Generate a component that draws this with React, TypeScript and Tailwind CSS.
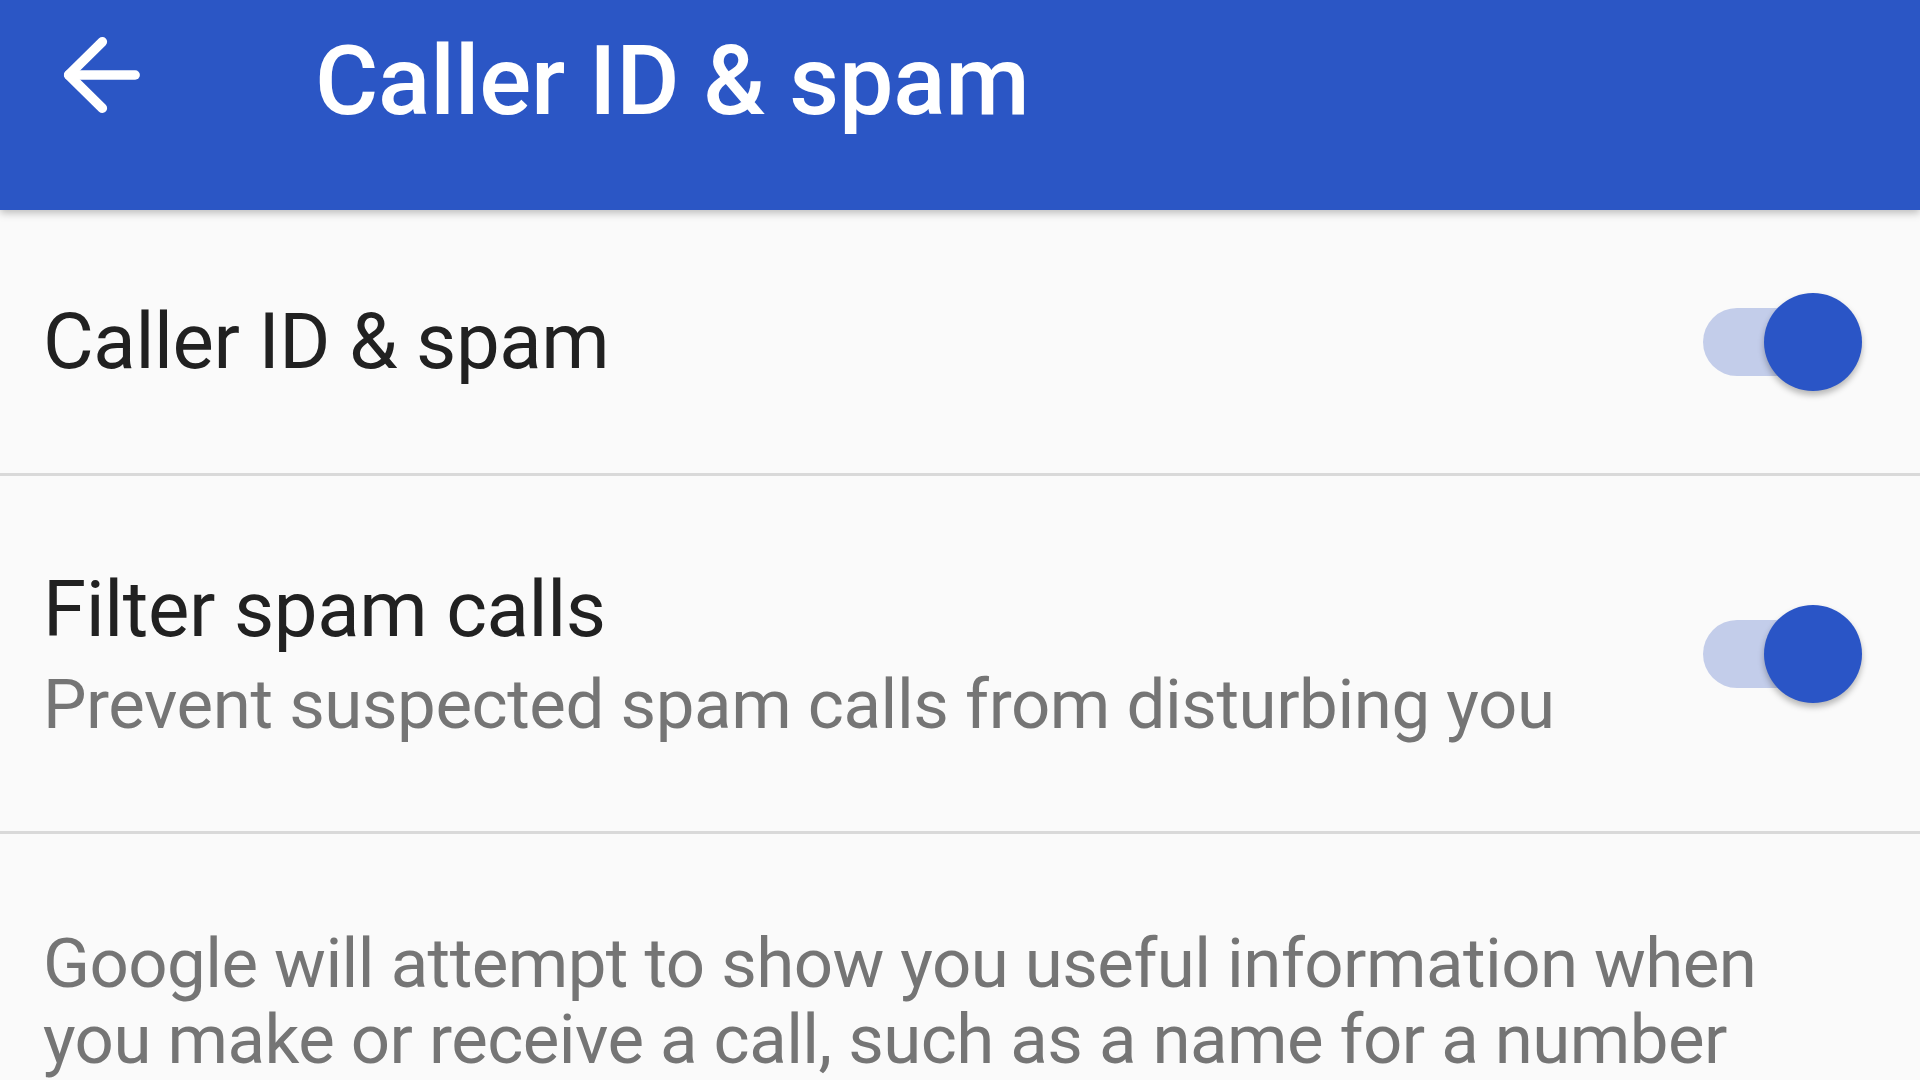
import React from "react";

const font = { fontFamily: "Roboto, 'Noto Sans', Arial, sans-serif" };

function BackArrow() {
  return (
    <svg
      width="114"
      height="114"
      viewBox="0 0 24 24"
      fill="none"
      stroke="#ffffff"
      strokeWidth="2"
      strokeLinecap="round"
      strokeLinejoin="round"
      aria-hidden="true"
    >
      <path d="M19.4 12H5.4" />
      <path d="M12.5 5L5.4 12l7.1 7" />
    </svg>
  );
}

function Toggle() {
  return (
    <div className="relative w-[159px] h-[98px] shrink-0">
      <div className="absolute left-0 top-[15px] w-[144px] h-[68px] rounded-full bg-[#c3cdea]" />
      <div className="absolute right-0 top-0 w-[98px] h-[98px] rounded-full bg-[#2a55c6] shadow-[0_4px_6px_rgba(0,0,0,0.28)]" />
    </div>
  );
}

export default function App() {
  return (
    <div className="w-[1920px] h-[1080px] overflow-hidden bg-[#fafafa] flex flex-col" style={font}>
      <header className="relative h-[210px] shrink-0 bg-[#2b56c5] flex items-start z-10 shadow-[0_3px_8px_rgba(0,0,0,0.25)]">
        <div className="ml-[43px] mt-[18px]">
          <BackArrow />
        </div>
        <h1 className="ml-[158px] mt-[26px] text-[97px] leading-[110px] font-medium text-white tracking-[-0.2px]">
          Caller ID &amp; spam
        </h1>
      </header>

      <div className="h-[263px] shrink-0 flex items-center justify-between pl-[43px] pr-[58px]">
        <div className="text-[78px] leading-[92px] text-[#212121] tracking-[-0.4px]">Caller ID &amp; spam</div>
        <Toggle />
      </div>
      <div className="h-[3px] shrink-0 bg-[#d9d9d9]" />

      <div className="h-[355px] shrink-0 flex items-center justify-between pl-[43px] pr-[58px]">
        <div className="flex flex-col pt-[10px]">
          <div className="text-[78px] leading-[92px] text-[#212121] tracking-[-0.4px]">Filter spam calls</div>
          <div className="text-[69px] leading-[98px] text-[#757575] tracking-[-0.45px]">
            Prevent suspected spam calls from disturbing you
          </div>
        </div>
        <Toggle />
      </div>
      <div className="h-[3px] shrink-0 bg-[#d9d9d9]" />

      <div className="pl-[43px] pr-[60px] pt-[92px] text-[69px] leading-[76px] text-[#757575] tracking-[-0.55px]">
        Google will attempt to show you useful information when you make or receive a call, such as a name for a number
      </div>
    </div>
  );
}
